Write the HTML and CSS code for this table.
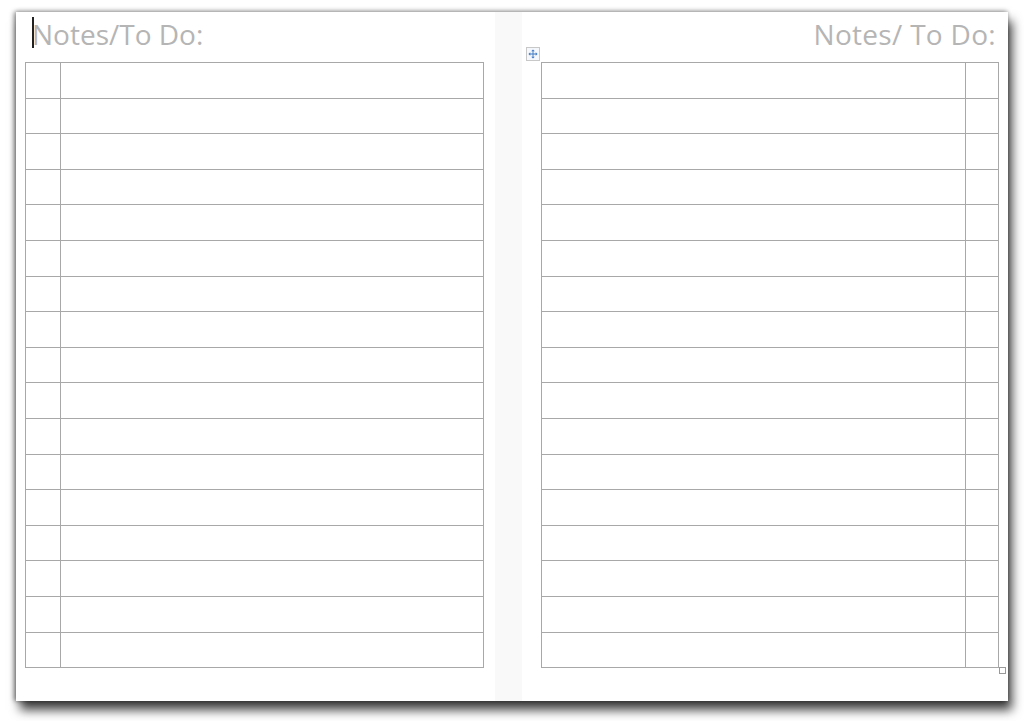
FILE: index.html
```html
<!DOCTYPE html>
<html lang="en">
<head>
    <meta charset="UTF-8">
    <meta name="viewport" content="width=device-width, initial-scale=1.0">
    <title>Notes / To Do</title>
    <link rel="stylesheet" href="styles.css">
</head>
<body>
    <div class="sheet">
        <div class="half left">
            <h2 class="heading"><span class="caret"></span>Notes/To Do:</h2>
            <table class="lines" id="leftLines"></table>
        </div>
        <div class="fold"></div>
        <div class="half right">
            <h2 class="heading">Notes/ To Do:</h2>
            <div class="table-wrap">
                <span class="move-handle">
                    <svg width="11" height="11" viewBox="0 0 11 11">
                        <path d="M5.5 0.5 L3.5 2.5 H5 V5 H2.5 V3.5 L0.5 5.5 L2.5 7.5 V6 H5 V8.5 H3.5 L5.5 10.5 L7.5 8.5 H6 V6 H8.5 V7.5 L10.5 5.5 L8.5 3.5 V5 H6 V2.5 H7.5 Z" fill="#3d78c4"/>
                    </svg>
                </span>
                <table class="lines" id="rightLines"></table>
                <span class="resize-handle"></span>
            </div>
        </div>
    </div>

    <script>
        function buildLines(id, checkFirst) {
            let table = document.getElementById(id);
            let html = "";
            for (let i = 0; i < 17; i++) {
                if (checkFirst) {
                    html += "<tr><td class='check'></td><td></td></tr>";
                } else {
                    html += "<tr><td></td><td class='check'></td></tr>";
                }
            }
            table.innerHTML = html;
        }
        buildLines("leftLines", true);
        buildLines("rightLines", false);
    </script>
</body>
</html>
```

FILE: styles.css
```css
body {
    margin: 0;
    padding: 12px 0 20px 16px;
    background: #ffffff;
    font-family: "Open Sans", "Noto Sans", sans-serif;
}
.sheet {
    display: flex;
    width: 992px;
    height: 689px;
    background: white;
    box-shadow: 4px 9px 10px rgba(0, 0, 0, 0.75), -2px 0 5px rgba(0, 0, 0, 0.4), 0 -1px 4px rgba(0, 0, 0, 0.2);
}
.half {
    display: flex;
    flex-direction: column;
}
.left {
    width: 459px;
    padding: 0 11px 0 9px;
}
.right {
    width: 458px;
    padding: 0 9px 0 19px;
}
.fold {
    width: 27px;
    background: #f9f9f9;
}
.heading {
    margin: 0;
    height: 50px;
    font-size: 28px;
    font-weight: 400;
    line-height: 42px;
    padding-top: 1px;
    box-sizing: border-box;
    color: #b5b5b5;
}
.left .heading {
    padding-left: 7px;
    position: relative;
}
.right .heading {
    text-align: right;
    padding-right: 3px;
    letter-spacing: 0.3px;
}
.caret {
    position: absolute;
    left: 7px;
    top: 5px;
    width: 2px;
    height: 31px;
    background: #222;
}
.table-wrap {
    position: relative;
}
.lines {
    border-collapse: collapse;
    width: 100%;
}
.lines td {
    border: 1px solid #a8a8a8;
    height: 34.6px;
    padding: 0;
}
.left .lines td.check {
    width: 34px;
}
.right .lines td.check {
    width: 32px;
}
.move-handle {
    position: absolute;
    left: -15px;
    top: -15px;
    width: 14px;
    height: 14px;
    border: 1px solid #c8c8c8;
    background: #f4f7fb;
    box-sizing: border-box;
    display: flex;
    align-items: center;
    justify-content: center;
}
.move-handle svg {
    width: 10px;
    height: 10px;
}
.resize-handle {
    position: absolute;
    right: -7px;
    bottom: -6px;
    width: 7px;
    height: 7px;
    border: 1px solid #999;
    background: white;
    box-sizing: border-box;
}
```
